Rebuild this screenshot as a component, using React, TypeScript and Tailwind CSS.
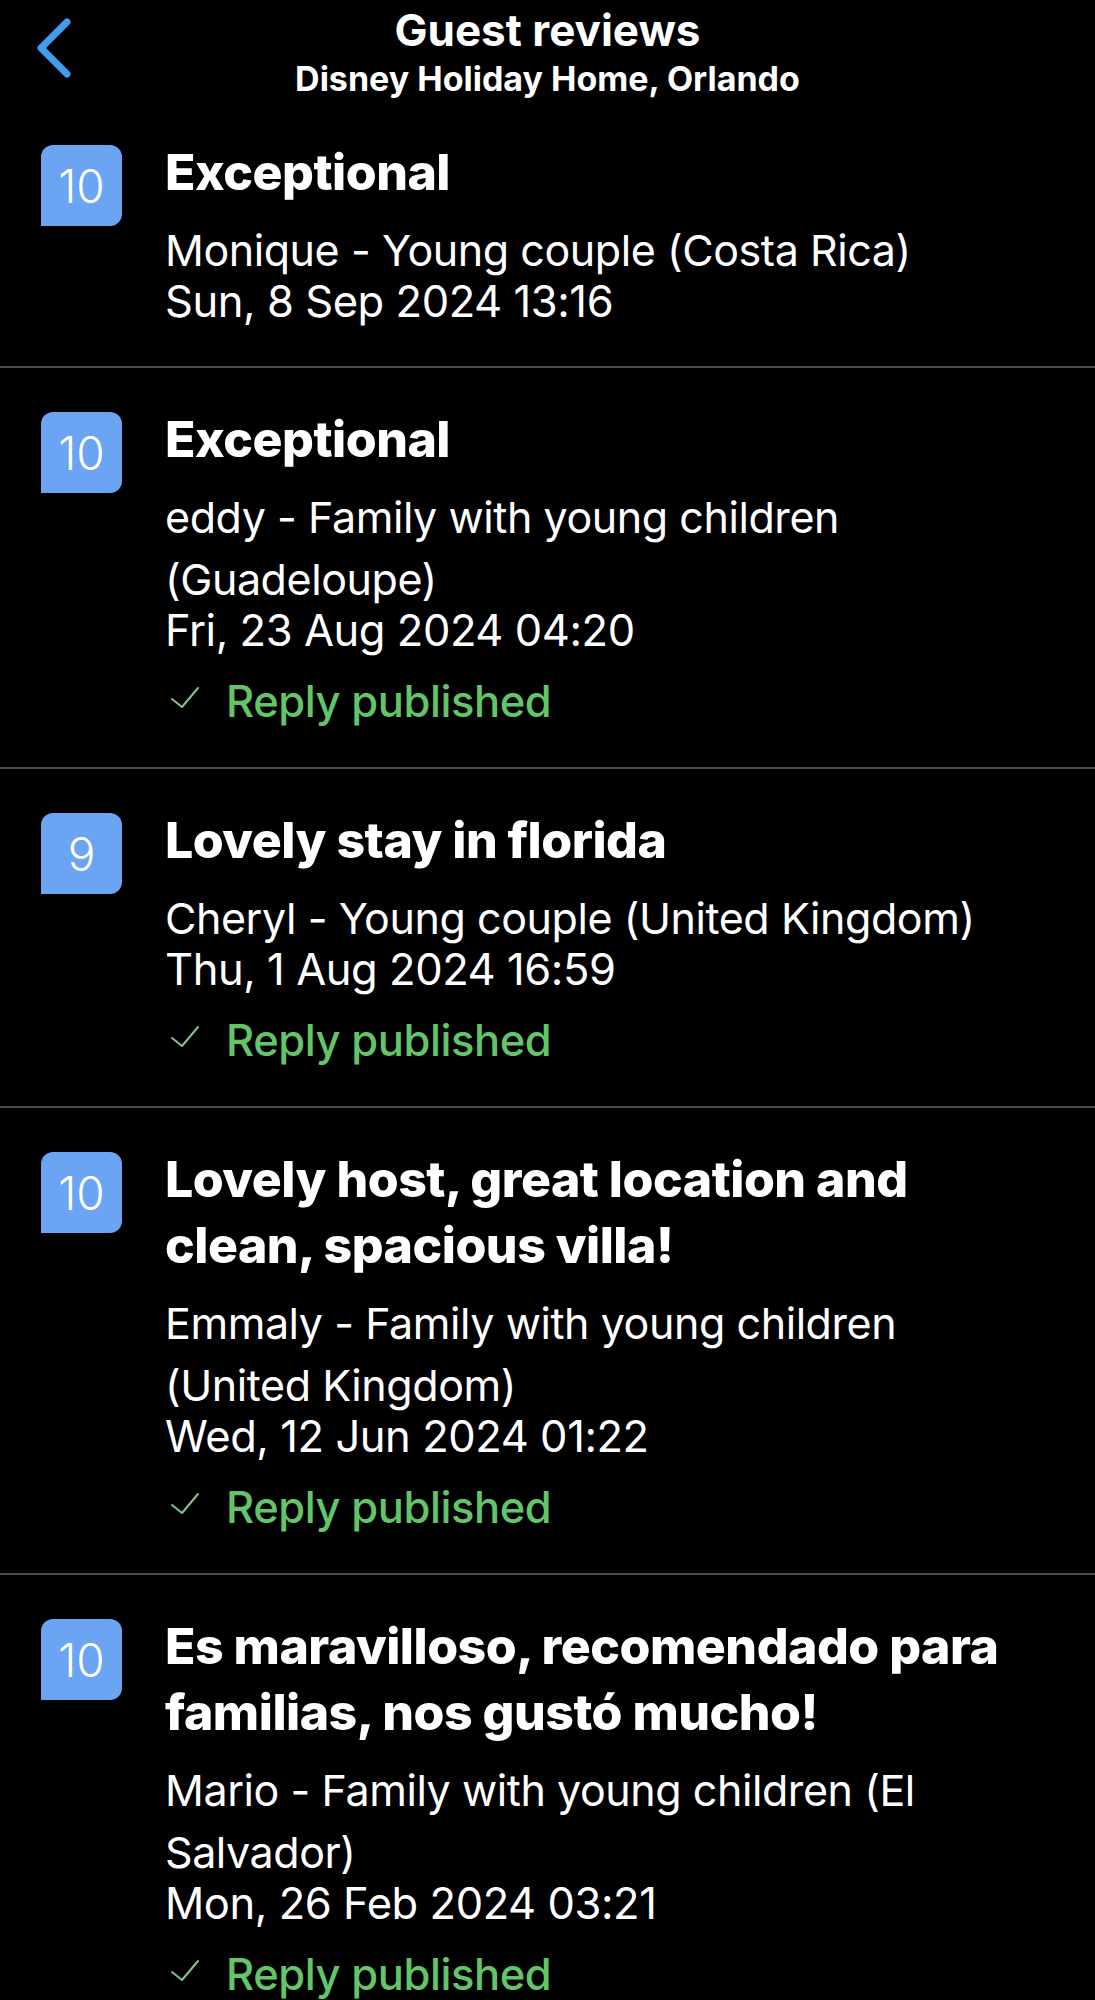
import React from 'react';

type Review = {
  score: number;
  title: string;
  guest: string;
  date: string;
  replied: boolean;
};

const reviews: Review[] = [
  {
    score: 10,
    title: 'Exceptional',
    guest: 'Monique - Young couple (Costa Rica)',
    date: 'Sun, 8 Sep 2024 13:16',
    replied: false,
  },
  {
    score: 10,
    title: 'Exceptional',
    guest: 'eddy - Family with young children (Guadeloupe)',
    date: 'Fri, 23 Aug 2024 04:20',
    replied: true,
  },
  {
    score: 9,
    title: 'Lovely stay in florida',
    guest: 'Cheryl - Young couple (United Kingdom)',
    date: 'Thu, 1 Aug 2024 16:59',
    replied: true,
  },
  {
    score: 10,
    title: 'Lovely host, great location and clean, spacious villa!',
    guest: 'Emmaly - Family with young children (United Kingdom)',
    date: 'Wed, 12 Jun 2024 01:22',
    replied: true,
  },
  {
    score: 10,
    title: 'Es maravilloso, recomendado para familias, nos gustó mucho!',
    guest: 'Mario - Family with young children (El Salvador)',
    date: 'Mon, 26 Feb 2024 03:21',
    replied: true,
  },
];

const BackChevron = () => (
  <svg width="40" height="64" viewBox="0 0 40 64" fill="none">
    <polyline
      points="31,5 5,31 31,57"
      stroke="#3f9df2"
      strokeWidth="7"
      strokeLinecap="round"
      strokeLinejoin="round"
    />
  </svg>
);

const CheckMark = () => (
  <svg width="30" height="24" viewBox="0 0 30 24" fill="none">
    <polyline
      points="2,13 12,21 28,2"
      stroke="#86c28c"
      strokeWidth="2"
      strokeLinecap="round"
      strokeLinejoin="round"
    />
  </svg>
);

const ReviewRow = ({ review }: { review: Review }) => (
  <div className="flex items-start border-b-2 border-[#4c4c4e] pl-[41px] pr-[70px] pt-[44px] pb-[45px]">
    {/* score badge */}
    <div className="flex h-[81px] w-[81px] shrink-0 items-center justify-center rounded-[12px] rounded-bl-none bg-[#6aa4f2] text-[46px] font-light leading-none text-white">
      {review.score}
    </div>

    <div className="ml-[43px] flex min-w-0 flex-1 flex-col">
      <h2 className="-mt-[6px] text-[50px] font-extrabold leading-[66px] tracking-[-0.01em] text-white">
        {review.title}
      </h2>
      <p className="mt-[14px] text-[43px] leading-[62px] tracking-[-0.01em] text-white">
        {review.guest}
      </p>
      <p className="text-[43.5px] leading-[40px] tracking-[-0.01em] text-white">
        {review.date}
      </p>
      {review.replied && (
        <div className="mt-[30px] flex items-center">
          <div className="ml-[5px] mr-[26px] flex h-[42px] items-center pb-[6px]">
            <CheckMark />
          </div>
          <span className="text-[43.5px] font-medium leading-[42px] tracking-[-0.01em] text-[#63c567]">
            Reply published
          </span>
        </div>
      )}
    </div>
  </div>
);

export default function App() {
  return (
    <div className="min-h-screen w-[1095px] overflow-hidden bg-black font-[family-name:Inter,sans-serif] text-white">
      {/* Nav bar */}
      <header className="grid h-[101px] grid-cols-[1fr_auto_1fr]">
        <div className="pl-[36px] pt-[17px]">
          <BackChevron />
        </div>
        <div className="flex flex-col items-center pt-[6px]">
          <h1 className="text-[44px] font-bold leading-[48px]">Guest reviews</h1>
          <p className="mt-[7px] text-[34px] font-bold leading-[36px]">Disney Holiday Home, Orlando</p>
        </div>
        <div />
      </header>

      <div className="flex flex-col">
        {reviews.map((r, i) => (
          <ReviewRow key={i} review={r} />
        ))}
      </div>
    </div>
  );
}
